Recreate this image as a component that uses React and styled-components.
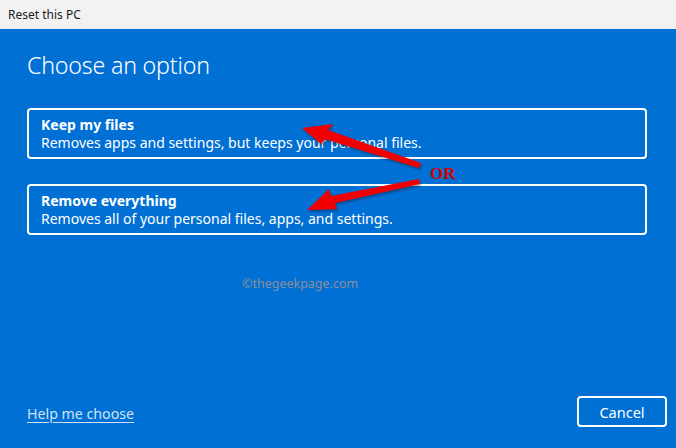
import React from 'react';
import styled, { createGlobalStyle } from 'styled-components';

const GlobalStyle = createGlobalStyle`
  html, body {
    margin: 0;
    padding: 0;
    height: 100%;
    overflow: hidden;
  }
  #root {
    height: 100%;
  }
`;

const options = [
  { title: 'Keep my files', desc: 'Removes apps and settings, but keeps your personal files.' },
  { title: 'Remove everything', desc: 'Removes all of your personal files, apps, and settings.' },
];

const App = () => {
  return (
    <>
      <GlobalStyle />
      <Window>
        <TitleBar>Reset this PC</TitleBar>
        <Body>
          <Heading>Choose an option</Heading>
          <OptionList>
            {options.map((o) => (
              <OptionCard key={o.title}>
                <OptionTitle>{o.title}</OptionTitle>
                <OptionDesc>{o.desc}</OptionDesc>
              </OptionCard>
            ))}
          </OptionList>
          <Watermark>©thegeekpage.com</Watermark>
          <Footer>
            <HelpLink>Help me choose</HelpLink>
            <CancelButton>Cancel</CancelButton>
          </Footer>
        </Body>

        <Arrows width="676" height="448" viewBox="0 0 676 448">
          <defs>
            <filter id="sh" x="-10%" y="-10%" width="120%" height="140%">
              <feDropShadow dx="1" dy="2" stdDeviation="1.2" floodColor="#000" floodOpacity="0.35" />
            </filter>
          </defs>
          <polygon
            filter="url(#sh)"
            fill="#f00000"
            points="302,128 333,124 328,130 421,163 419,168 325,139 321,144"
          />
          <polygon
            filter="url(#sh)"
            fill="#f00000"
            points="307,210 329,189 331,196 419,179 420,184 335,203 337,209"
          />
        </Arrows>
        <OrLabel>OR</OrLabel>
      </Window>
    </>
  );
};

const Window = styled.div`
  position: relative;
  height: 100%;
  display: flex;
  flex-direction: column;
  font-family: 'Noto Sans', 'Open Sans', sans-serif;
  background: #0170d5;
  color: #fff;
`;

const TitleBar = styled.div`
  height: 29px;
  flex-shrink: 0;
  background: #f2f2f2;
  color: #1a1a1a;
  font-size: 12px;
  line-height: 29px;
  padding-left: 8px;
`;

const Body = styled.div`
  flex: 1;
  display: flex;
  flex-direction: column;
  padding: 0 0 0 27px;
`;

const Heading = styled.h1`
  margin: 20px 0 0;
  font-size: 23.2px;
  font-weight: 300;
  line-height: 32px;
  letter-spacing: -0.2px;
`;

const OptionList = styled.div`
  display: flex;
  flex-direction: column;
  gap: 25px;
  margin: 27px 29px 0 0;
`;

const OptionCard = styled.div`
  border: 2px solid #fff;
  border-radius: 4px;
  padding: 6px 12px 5px;
`;

const OptionTitle = styled.div`
  font-size: 14px;
  font-weight: 700;
  line-height: 18px;
`;

const OptionDesc = styled.div`
  font-size: 14px;
  line-height: 18px;
`;

const Watermark = styled.div`
  margin: 40px 0 0 215px;
  font-size: 12.5px;
  line-height: 18px;
  color: #8a8f9a;
`;

const Footer = styled.div`
  margin-top: auto;
  display: flex;
  justify-content: space-between;
  align-items: center;
  padding: 0 9px 21px 0;
`;

const HelpLink = styled.a`
  font-size: 14.2px;
  color: #cfe3f8;
  text-decoration: underline;
  text-underline-offset: 3px;
  margin-top: 3px;
`;

const CancelButton = styled.button`
  width: 90px;
  height: 31px;
  border: 2px solid #fff;
  border-radius: 4px;
  background: transparent;
  color: #fff;
  font-family: inherit;
  font-size: 14.5px;
  padding: 0;
`;

const Arrows = styled.svg`
  position: absolute;
  left: 0;
  top: 0;
  pointer-events: none;
`;

const OrLabel = styled.div`
  position: absolute;
  left: 430px;
  top: 164px;
  font-family: 'Liberation Serif', serif;
  font-weight: 700;
  font-size: 17px;
  color: #d40000;
`;

export default App;
